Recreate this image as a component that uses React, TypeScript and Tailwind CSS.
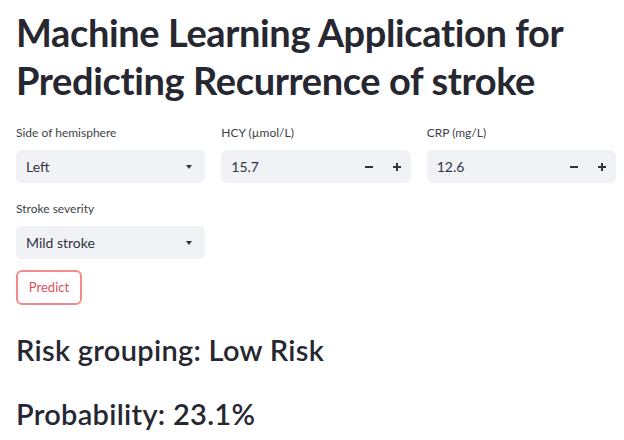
import React from "react";

const font = { fontFamily: "Lato, 'Noto Sans', sans-serif" };

export default function App() {
  return (
    <div className="w-[624px] h-[440px] bg-white text-[#31333f] overflow-hidden" style={font}>
      <div className="pl-4 w-[616px]">
        <h1 className="pt-[8px] text-[38px] leading-[48px] font-bold tracking-[-0.01em] text-[#262730]">
          Machine Learning Application for Predicting Recurrence of stroke
        </h1>

        <div className="mt-[21px] grid grid-cols-3 gap-x-4 gap-y-[18px]">
          <Field label="Side of hemisphere">
            <SelectBox value="Left" />
          </Field>
          <Field label="HCY (µmol/L)">
            <NumberBox value="15.7" />
          </Field>
          <Field label="CRP (mg/L)">
            <NumberBox value="12.6" />
          </Field>
          <Field label="Stroke severity">
            <SelectBox value="Mild stroke" />
          </Field>
        </div>

        <button className="mt-[11px] h-[35px] w-[66px] rounded-md border-2 border-[#f28b8b] bg-white text-[13px] text-[#e0505a]">
          Predict
        </button>

        <h3 className="mt-[27px] text-[29px] leading-[36px] font-semibold tracking-[0.01em] text-[#262730]">Risk grouping: Low Risk</h3>
        <h3 className="mt-[28px] text-[29px] leading-[36px] font-semibold tracking-[0.01em] text-[#262730]">Probability: 23.1%</h3>
      </div>
    </div>
  );
}

function Field({ label, children }: { label: string; children: React.ReactNode }) {
  return (
    <div className="flex flex-col">
      <label className="text-[12px] leading-[16px] text-[#3d3f4a] mb-[9px]">{label}</label>
      {children}
    </div>
  );
}

function SelectBox({ value }: { value: string }) {
  return (
    <div className="h-[33px] rounded-md bg-[#f0f2f6] flex items-center pl-[10px] pr-[13px] text-[14px]">
      <span className="flex-grow">{value}</span>
      <svg width="6" height="4" viewBox="0 0 6 4">
        <path d="M0 0h6L3 4z" fill="#31333f" />
      </svg>
    </div>
  );
}

function NumberBox({ value }: { value: string }) {
  return (
    <div className="h-[33px] rounded-md bg-[#f0f2f6] flex items-center pl-[10px] text-[14px]">
      <span className="flex-grow">{value}</span>
      <span className="w-[28px] flex justify-center">
        <svg width="8" height="2" viewBox="0 0 8 2"><rect width="8" height="2" fill="#31333f" /></svg>
      </span>
      <span className="w-[28px] flex justify-center">
        <svg width="8" height="8" viewBox="0 0 8 8"><path d="M3 0h2v3h3v2H5v3H3V5H0V3h3z" fill="#31333f" /></svg>
      </span>
    </div>
  );
}
